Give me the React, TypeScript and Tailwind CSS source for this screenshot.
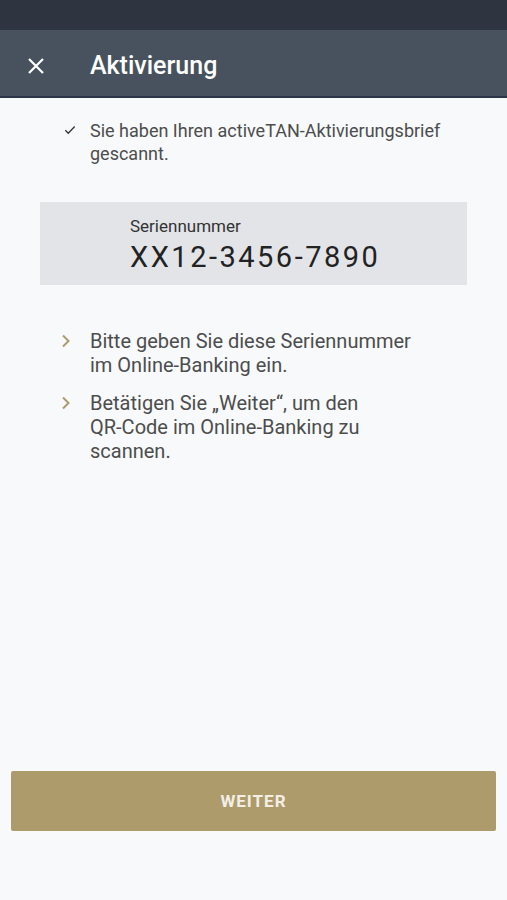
import React from "react";

const Check = () => (
    <svg width="14" height="14" viewBox="0 0 24 24" className="shrink-0 mt-[4px]">
        <path d="M4 12.5l5 5L20 6" fill="none" stroke="#333" strokeWidth="2.2" />
    </svg>
);

const Chevron = () => (
    <svg width="10" height="14" viewBox="0 0 10 14" className="shrink-0 mt-[5px]">
        <path d="M2 1.5l5.5 5.5L2 12.5" fill="none" stroke="#ad9b6c" strokeWidth="2" />
    </svg>
);

const App: React.FC = () => {
    return (
        <div className="w-[507px] h-[900px] bg-[#f7f9fb] flex flex-col font-['Roboto',sans-serif]">
            {/* status bar */}
            <div className="h-[30px] bg-[#2f3540]" />

            {/* app bar */}
            <div className="h-[68px] bg-[#47525e] border-b-2 border-[#2c3547] flex items-center pt-[5px]">
                <div className="w-[90px] pl-[26px] flex items-center">
                    <svg width="20" height="20" viewBox="0 0 20 20">
                        <path d="M3 3l14 14M17 3L3 17" stroke="#fff" strokeWidth="2.2" />
                    </svg>
                </div>
                <h1 className="text-white text-[25px] font-medium">Aktivierung</h1>
            </div>

            {/* scanned note */}
            <div className="flex gap-[13px] pl-[63px] pr-[37px] mt-[21px]">
                <Check />
                <p className="text-[#4d4d4d] text-[18px] leading-[23px]">
                    Sie haben Ihren activeTAN-Aktivierungsbrief gescannt.
                </p>
            </div>

            {/* serial number box */}
            <div className="mx-[40px] w-[427px] mt-[37px] h-[83px] bg-[#e2e4e7] pl-[90px] pt-[13px]">
                <div className="text-[#333] text-[17px] leading-[22px]">Seriennummer</div>
                <div className="text-[#222] text-[29px] leading-[36px] tracking-[2.5px] mt-[2px]">XX12-3456-7890</div>
            </div>

            {/* steps */}
            <div className="flex flex-col gap-[14px] pl-[61px] pr-[77px] mt-[44px]">
                <div className="flex gap-[19px]">
                    <Chevron />
                    <p className="text-[#4d4d4d] text-[20px] leading-[24px]">
                        Bitte geben Sie diese Seriennummer im Online-Banking ein.
                    </p>
                </div>
                <div className="flex gap-[19px]">
                    <Chevron />
                    <p className="text-[#4d4d4d] text-[20px] leading-[24px]">
                        Betätigen Sie „Weiter“, um den <span className="whitespace-nowrap">QR-Code</span> im Online-Banking zu scannen.
                    </p>
                </div>
            </div>

            <div className="flex-1" />

            {/* button */}
            <div className="mx-[11px] mb-[69px] h-[60px] bg-[#ad9b6c] rounded-[2px] flex items-center justify-center pt-[2px]">
                <span className="text-[#f3efe4] text-[17px] font-bold tracking-[1px]">WEITER</span>
            </div>
        </div>
    );
};

export default App;
